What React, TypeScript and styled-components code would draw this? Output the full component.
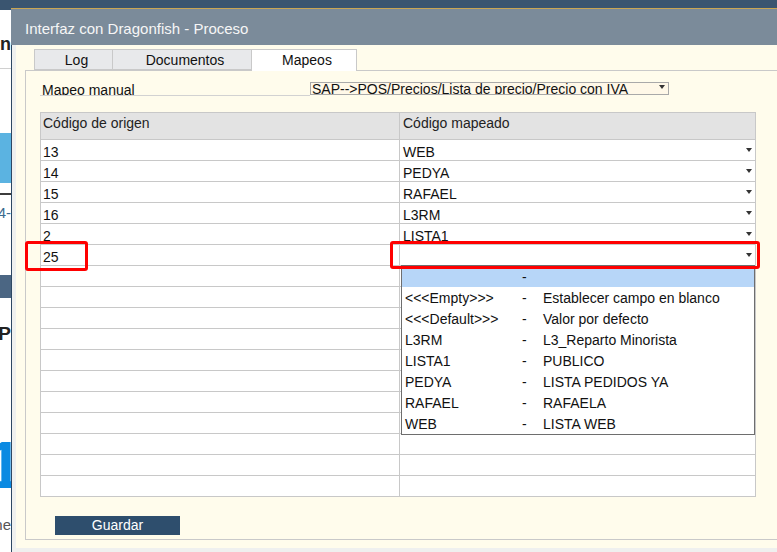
import React from "react";
import styled, { createGlobalStyle } from "styled-components";

const GlobalStyle = createGlobalStyle`
  * { box-sizing: border-box; }
  html, body { margin: 0; padding: 0; }
  body {
    width: 777px;
    height: 552px;
    overflow: hidden;
    background: #ffffff;
    font-family: "Liberation Sans", Arial, sans-serif;
    color: #111111;
  }
`;

const Page = styled.div`
  position: relative;
  width: 777px;
  height: 552px;
  overflow: hidden;
  background: #ffffff;
`;

/* ---------- background application (mostly hidden by the dialog) ---------- */

const BackApp = styled.div`
  display: flex;
  flex-direction: column;
  height: 100%;
`;

const BackTopBar = styled.div`
  height: 10px;
  flex-shrink: 0;
  background: #3a5570;
`;

const BackSide = styled.div`
  width: 11px;
  flex: 1;
  overflow: hidden;
  display: flex;
  flex-direction: column;
`;

const SideText = styled.div<{ $size: number; $color: string; $weight?: number; $mt: number; $shift?: number }>`
  margin-top: ${(p) => p.$mt}px;
  margin-right: ${(p) => -(p.$shift ?? 0)}px;
  display: flex;
  justify-content: flex-end;
  white-space: nowrap;
  font-size: ${(p) => p.$size}px;
  line-height: ${(p) => p.$size}px;
  font-weight: ${(p) => p.$weight ?? 400};
  color: ${(p) => p.$color};
`;

const SideBlock = styled.div<{ $h: number; $bg: string; $mt: number }>`
  margin-top: ${(p) => p.$mt}px;
  height: ${(p) => p.$h}px;
  flex-shrink: 0;
  background: ${(p) => p.$bg};
`;

/* ---------- dialog ---------- */

const Dialog = styled.section`
  position: absolute;
  left: 11px;
  top: 8px;
  bottom: 0;
  width: 790px;
  display: flex;
  flex-direction: column;
  border-top: 1px solid #c9a552;
`;

const TitleBar = styled.div`
  height: 36px;
  flex-shrink: 0;
  padding: 4px 0 0 14px;
  line-height: 32px;
  background: #7b8b9a;
  color: #f6f6f6;
  font-size: 15px;
  white-space: nowrap;
`;

const DialogBody = styled.div`
  flex: 1;
  display: flex;
  padding: 0 0 4px 4px;
  background: #eff0ef;
  border-left: 1px solid #2d4763;
`;

const CreamPane = styled.div`
  flex: 1;
  display: flex;
  flex-direction: column;
  padding: 4px 0 8px 9px;
  background: #fffcec;
`;

const TabStrip = styled.div`
  position: relative;
  z-index: 1;
  display: flex;
  height: 21px;
  padding-left: 9px;
  flex-shrink: 0;
`;

const Tab = styled.div<{ $active?: boolean; $w: number }>`
  width: ${(p) => p.$w}px;
  height: ${(p) => (p.$active ? 22 : 21)}px;
  padding-left: 6px;
  border: 1px solid #c9c9c9;
  border-bottom: ${(p) => (p.$active ? "none" : "1px solid #c9c9c9")};
  background: ${(p) => (p.$active ? "#ffffff" : "#e8e9eb")};
  text-align: center;
  font-size: 14px;
  line-height: 20px;
  color: #111111;
  & + & {
    margin-left: -1px;
  }
`;

const TabPanel = styled.div`
  flex: 1;
  display: flex;
  flex-direction: column;
  padding: 11px 0 4px 14px;
  border: 1px solid #c9c9c9;
`;

const ManualRow = styled.div`
  display: flex;
  align-items: flex-start;
  height: 14px;
  flex-shrink: 0;
`;

const ManualLabel = styled.div`
  width: 270px;
  height: 14px;
  padding-left: 2px;
  overflow: hidden;
  border-bottom: 1px solid #d2d2d2;
  font-size: 14px;
  line-height: 16px;
  white-space: nowrap;
`;

const ManualSelect = styled.div`
  width: 359px;
  height: 13px;
  display: flex;
  justify-content: space-between;
  padding: 0 3px 0 1px;
  overflow: hidden;
  border: 1px solid #a9a9a9;
  background: #fff8e8;
  font-size: 14px;
  line-height: 12px;
  white-space: nowrap;
`;

const Caret = styled.span<{ $mt: number }>`
  flex-shrink: 0;
  width: 0;
  height: 0;
  margin-top: ${(p) => p.$mt}px;
  border-left: 3px solid transparent;
  border-right: 3px solid transparent;
  border-top: 4px solid #333333;
`;

const Grid = styled.div`
  position: relative;
  width: 716px;
  margin-top: 16px;
  flex-shrink: 0;
  border: 1px solid #c8c8c8;
  border-bottom: none;
  background: #ffffff;
`;

const HeaderRow = styled.div`
  display: grid;
  grid-template-columns: 359px 1fr;
  height: 27px;
  border-bottom: 1px solid #c8c8c8;
  background: #e3e3e3;
`;

const HeadCell = styled.div<{ $first?: boolean }>`
  padding-left: ${(p) => (p.$first ? 2 : 3)}px;
  border-right: ${(p) => (p.$first ? "1px solid #c8c8c8" : "none")};
  font-size: 14px;
  line-height: 20px;
  color: #222222;
`;

const Row = styled.div`
  display: grid;
  grid-template-columns: 359px 1fr;
  height: 21px;
  border-bottom: 1px solid #c8c8c8;
`;

const Cell = styled.div<{ $first?: boolean }>`
  display: flex;
  justify-content: space-between;
  height: 20px;
  padding: 2px 3px 0 ${(p) => (p.$first ? 2 : 3)}px;
  overflow: hidden;
  border-right: ${(p) => (p.$first ? "1px solid #c8c8c8" : "none")};
  font-size: 14px;
  line-height: 20px;
  white-space: nowrap;
`;

const DropList = styled.div`
  position: absolute;
  z-index: 2;
  left: 360px;
  top: 152px;
  width: 354px;
  border: 1px solid #6e6e6e;
  background: #ffffff;
`;

const DropItem = styled.div<{ $selected?: boolean }>`
  display: grid;
  grid-template-columns: 117px 21px 1fr;
  height: 21px;
  padding: 1px 0 0 3px;
  background: ${(p) => (p.$selected ? "#b7d6f8" : "#ffffff")};
  font-size: 14px;
  line-height: 20px;
  white-space: nowrap;
  color: #111111;
`;

const Highlight = styled.div<{ $left: number; $top: number; $w: number; $h: number }>`
  position: absolute;
  z-index: 3;
  left: ${(p) => p.$left}px;
  top: ${(p) => p.$top}px;
  width: ${(p) => p.$w}px;
  height: ${(p) => p.$h}px;
  border: 3px solid #ff0000;
  border-radius: 3px;
  pointer-events: none;
`;

const SaveButton = styled.button`
  width: 125px;
  height: 19px;
  margin: 19px 0 0 15px;
  padding: 0;
  border: none;
  background: #2e4e6d;
  color: #ffffff;
  font-family: "Liberation Sans", Arial, sans-serif;
  font-size: 14px;
  line-height: 19px;
  text-align: center;
`;

const rows: { origin: string; mapped: string }[] = [
  { origin: "13", mapped: "WEB" },
  { origin: "14", mapped: "PEDYA" },
  { origin: "15", mapped: "RAFAEL" },
  { origin: "16", mapped: "L3RM" },
  { origin: "2", mapped: "LISTA1" },
  { origin: "25", mapped: "" },
];

const options: { code: string; desc: string; selected?: boolean }[] = [
  { code: "", desc: "", selected: true },
  { code: "<<<Empty>>>", desc: "Establecer campo en blanco" },
  { code: "<<<Default>>>", desc: "Valor por defecto" },
  { code: "L3RM", desc: "L3_Reparto Minorista" },
  { code: "LISTA1", desc: "PUBLICO" },
  { code: "PEDYA", desc: "LISTA PEDIDOS YA" },
  { code: "RAFAEL", desc: "RAFAELA" },
  { code: "WEB", desc: "LISTA WEB" },
];

const EMPTY_ROWS = 11;

export default function App() {
  return (
    <>
      <GlobalStyle />
      <Page>
        <BackApp>
          <BackTopBar />
          <BackSide>
            <SideText $size={18} $color="#222" $weight={700} $mt={25}>Configuración</SideText>
            <SideBlock $h={1} $bg="#d0d0d0" $mt={15} />
            <SideBlock $h={50} $bg="#5bb3e1" $mt={64} />
            <SideBlock $h={2} $bg="#3c3c3c" $mt={10} />
            <SideText $size={15} $color="#3d6a8e" $mt={10}>2024-</SideText>
            <SideBlock $h={23} $bg="#4b6683" $mt={55} />
            <SideText $size={19} $color="#222" $weight={700} $mt={26}>P</SideText>
            <SideText $size={67} $color="#0b8ae2" $weight={700} $mt={88} $shift={12}>1</SideText>
            <SideText $size={15} $color="#555" $mt={19}>Resumene</SideText>
          </BackSide>
        </BackApp>

        <Dialog>
          <TitleBar>Interfaz con Dragonfish - Proceso</TitleBar>
          <DialogBody>
            <CreamPane>
              <TabStrip>
                <Tab $w={79}>Log</Tab>
                <Tab $w={140}>Documentos</Tab>
                <Tab $w={106} $active>Mapeos</Tab>
              </TabStrip>
              <TabPanel>
                <ManualRow>
                  <ManualLabel>Mapeo manual</ManualLabel>
                  <ManualSelect>
                    <span>SAP--&gt;POS/Precios/Lista de precio/Precio con IVA</span>
                    <Caret $mt={2} />
                  </ManualSelect>
                </ManualRow>

                <Grid>
                  <HeaderRow>
                    <HeadCell $first>Código de origen</HeadCell>
                    <HeadCell>Código mapeado</HeadCell>
                  </HeaderRow>
                  {rows.map((r) => (
                    <Row key={r.origin}>
                      <Cell $first>{r.origin}</Cell>
                      <Cell>
                        <span>{r.mapped}</span>
                        <Caret $mt={6} />
                      </Cell>
                    </Row>
                  ))}
                  {Array.from({ length: EMPTY_ROWS }).map((_, i) => (
                    <Row key={`e${i}`}>
                      <Cell $first />
                      <Cell />
                    </Row>
                  ))}

                  <DropList>
                    {options.map((o, i) => (
                      <DropItem key={i} $selected={o.selected}>
                        <span>{o.code}</span>
                        <span>-</span>
                        <span>{o.desc}</span>
                      </DropItem>
                    ))}
                  </DropList>

                  <Highlight $left={-16} $top={128} $w={63} $h={30} />
                  <Highlight $left={349} $top={128} $w={370} $h={28} />
                </Grid>

                <SaveButton>Guardar</SaveButton>
              </TabPanel>
            </CreamPane>
          </DialogBody>
        </Dialog>
      </Page>
    </>
  );
}
